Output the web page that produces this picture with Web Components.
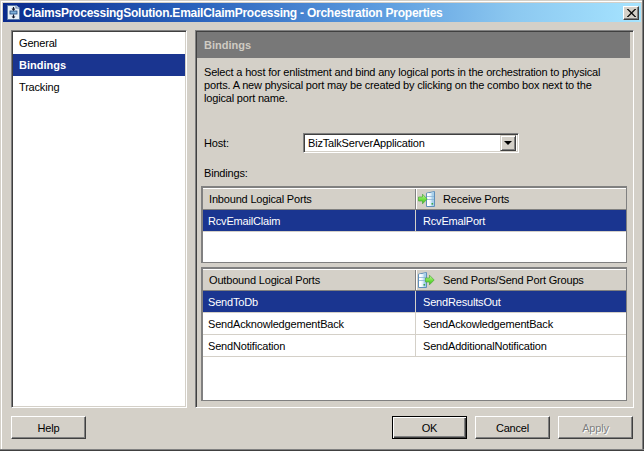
<!DOCTYPE html>
<html><head><meta charset="utf-8">
<style>
html,body{margin:0;padding:0;background:#d4d0c8;}
body{font:11px "Liberation Sans",Arial,sans-serif;letter-spacing:-.18px;color:#000;}
</style></head><body>
<props-window>
  <title-bar slot="title">ClaimsProcessingSolution.EmailClaimProcessing - Orchestration Properties</title-bar>
  <nav-list slot="nav">
    <nav-item>General</nav-item>
    <nav-item selected>Bindings</nav-item>
    <nav-item>Tracking</nav-item>
  </nav-list>
  <bindings-panel slot="main">
    <port-table slot="inbound" head1="Inbound Logical Ports" head2="Receive Ports" kind="receive" h="77">
      <port-row selected><span>RcvEmailClaim</span><span>RcvEmalPort</span></port-row>
    </port-table>
    <port-table slot="outbound" head1="Outbound Logical Ports" head2="Send Ports/Send Port Groups" kind="send" h="134">
      <port-row selected><span>SendToDb</span><span>SendResultsOut</span></port-row>
      <port-row><span>SendAcknowledgementBack</span><span>SendAckowledgementBack</span></port-row>
      <port-row><span>SendNotification</span><span>SendAdditionalNotification</span></port-row>
    </port-table>
  </bindings-panel>
  <dlg-button slot="help">Help</dlg-button>
  <dlg-button slot="actions" default>OK</dlg-button>
  <dlg-button slot="actions">Cancel</dlg-button>
  <dlg-button slot="actions" disabled>Apply</dlg-button>
</props-window>
<script>
const def=(name,html)=>{
  customElements.define(name,class extends HTMLElement{
    constructor(){super();this.attachShadow({mode:'open'}).innerHTML=typeof html==='function'?html(this):html;}
  });
};
def('props-window',`<style>
:host{display:flex;flex-direction:column;width:644px;height:451px;box-sizing:border-box;padding:3px 3px 2px;background:#d4d0c8;position:relative;}
.edge{position:absolute;left:0;right:0;bottom:0;height:2px;background:linear-gradient(#808080 50%,#404040 50%);}
.tw{position:absolute;left:1px;right:1px;top:1px;height:1px;background:#fff;}
.lw{position:absolute;left:1px;top:1px;bottom:2px;width:1px;background:#fff;}
.re{position:absolute;right:0;top:0;bottom:0;width:2px;background:linear-gradient(90deg,#808080 50%,#404040 50%);}
.body{display:flex;gap:8px;padding:8px 7px 0 8px;height:378px;}
.foot{display:flex;justify-content:space-between;padding:8px 8px 0 8px;}
.acts{display:flex;gap:8px;}
</style><div class="tw"></div><div class="lw"></div><div class="re"></div><div class="edge"></div>
<slot name="title"></slot>
<div class="body"><slot name="nav"></slot><slot name="main"></slot></div>
<div class="foot"><slot name="help"></slot><div class="acts"><slot name="actions"></slot></div></div>`);
def('title-bar',`<style>
:host{display:flex;align-items:center;height:19px;flex:none;padding:0 2px 0 4px;
 background:linear-gradient(90deg,#0a2a8c 0%,#2a62bc 30%,#5a9ade 58%,#8cc8f0 80%,#a6e4ff 100%);
 color:#fff;font:bold 12px "Liberation Sans",Arial,sans-serif;letter-spacing:-.24px;}
svg{flex:none;margin-right:3px;}
.t{flex:1;white-space:nowrap;}
.x{flex:none;width:16px;height:14px;box-sizing:border-box;background:#d4d0c8;border:1px solid;border-color:#fff #404040 #404040 #fff;box-shadow:inset -1px -1px 0 #808080;display:flex;align-items:center;justify-content:center;}
</style>
<svg width="13" height="15" viewBox="0 0 13 15"><path d="M.5 .5H9L12.5 3V14.5H.5Z" fill="#e8f0f8" stroke="#5a7aa8"/><path d="M9 .5V3H12.5" fill="#fff" stroke="#5a7aa8"/><rect x="3" y="6" width="7" height="3" fill="#7fb0d8" stroke="#204a80" stroke-width=".8"/><path d="M6.5 2V5M6.5 9.5V13" stroke="#101830" stroke-width="1.2"/><path d="M4.5 3.6L6.5 6 8.5 3.6M4.5 11.4 6.5 13.6 8.5 11.4" fill="#101830"/></svg>
<span class="t"><slot></slot></span>
<span class="x"><svg width="9" height="8" viewBox="0 0 9 8" style="margin:0"><path d="M1 0 4.5 3.2 8 0 9 0 5.2 4 9 8H8L4.5 4.8 1 8H0L3.8 4 0 0Z" fill="#000" stroke="#000" stroke-width=".5"/></svg></span>`);
def('nav-list',`<style>
:host{display:block;width:176px;height:378px;box-sizing:border-box;background:#fff;padding:1px;
 border:1px solid;border-color:#808080 #fff #fff #808080;box-shadow:inset 1px 1px 0 #404040,inset -1px -1px 0 #d4d0c8;}
</style><slot></slot>`);
def('nav-item',`<style>
:host{display:flex;align-items:center;height:22px;padding-left:6px;}
:host([selected]){background:#1a3590;color:#fff;font-weight:bold;letter-spacing:0;}
</style><slot></slot>`);
def('bindings-panel',`<style>
:host{display:flex;flex-direction:column;width:439px;height:378px;box-sizing:border-box;border:1px solid;border-color:#808080 #fff #fff #808080;box-shadow:inset 1px 1px 0 #404040,inset -1px -1px 0 #d4d0c8;padding:1px 1px 0 1px;}
.hd{height:26px;flex:none;background:#787878;color:#cfcbc3;font-weight:bold;letter-spacing:0;display:flex;align-items:center;padding-left:7px;margin-right:2px;box-sizing:border-box;}
.d{margin:8px 8px 0 7px;line-height:13px;height:39px;white-space:nowrap;}
.host{display:flex;align-items:center;margin:28px 0 0 7px;height:20px;}
.host label{width:99px;}
.bl{margin:14px 0 0 7px;line-height:13px;height:13px;}
.tables{display:flex;flex-direction:column;gap:4px;margin:6px 0 0 4px;width:426px;}
</style>
<div class="hd">Bindings</div>
<div class="d">Select a host for enlistment and bind any logical ports in the orchestration to physical<br>ports. A new physical port may be created by clicking on the combo box next to the<br>logical port name.</div>
<div class="host"><label>Host:</label><combo-box>BizTalkServerApplication</combo-box></div>
<div class="bl">Bindings:</div>
<div class="tables"><slot name="inbound"></slot><slot name="outbound"></slot></div>`);
def('combo-box',`<style>
:host{display:flex;width:216px;height:20px;box-sizing:border-box;background:#fff;border:1px solid;border-color:#808080 #fff #fff #808080;box-shadow:inset 1px 1px 0 #404040,inset -1px -1px 0 #d4d0c8;padding:2px;align-items:center;}
.v{flex:1;padding-left:2px;white-space:nowrap;}
.b{width:16px;height:16px;box-sizing:border-box;background:#d4d0c8;border:1px solid;border-color:#d4d0c8 #404040 #404040 #d4d0c8;box-shadow:inset 1px 1px 0 #fff,inset -1px -1px 0 #808080;display:flex;align-items:center;justify-content:center;}
.a{width:0;height:0;border:4px solid transparent;border-top:4px solid #000;border-bottom:0;}
</style><span class="v"><slot></slot></span><span class="b"><span class="a"></span></span>`);
const arrow=(x,id)=>`<path d="M${x+.5} 6h4V3.2L${x+9.2} 8l-4.7 4.8V10h-4Z" fill="url(#${id})" stroke="#4aa83a" stroke-width=".7"/>`;
const serverIcon=(x)=>`<path d="M${x+.5} 2.2 ${x+8.5} .5V15.5H${x+.5}Z" fill="#e4f2fb" stroke="#5f8fba"/><path d="M${x+1} 2.6 ${x+3.5} 2V15H${x+1}Z" fill="#fff"/><path d="M${x+5.5} 1.6 ${x+8} 1V15H${x+5.5}Z" fill="#a8d0ea"/><path d="M${x+1} 5.5h7M${x+1} 8.5h7" stroke="#8db4d4" stroke-width=".8"/><rect x="${x+5.5}" y="12" width="1.6" height="1.6" fill="#3aa84a"/>`;
const grad=id=>`<defs><linearGradient id="${id}" x1="0" y1="0" x2="0" y2="1"><stop offset="0" stop-color="#c8f8a0"/><stop offset=".55" stop-color="#6fe040"/><stop offset="1" stop-color="#40b828"/></linearGradient></defs>`;
def('port-table',h=>{
  const send=h.getAttribute('kind')==='send';
  const icon=send?`<svg width="17" height="16" viewBox="0 0 17 16">${grad('ga')}${serverIcon(0)}${arrow(7,'ga')}</svg>`:`<svg width="17" height="16" viewBox="0 0 17 16">${grad('gb')}${serverIcon(8)}${arrow(0,'gb')}</svg>`;
  return `<style>
:host{display:block;box-sizing:border-box;height:${h.getAttribute('h')}px;background:#fff;border:solid #808080;border-width:2px 1px 1px 2px;}
.h{display:grid;grid-template-columns:212px 1fr;height:22px;box-sizing:border-box;background:#d4d0c8;border-top:1px solid #fff;border-bottom:1px solid #808080;}
.c{display:flex;align-items:center;padding-left:6px;}
.c+.c{border-left:1px solid #808080;box-shadow:inset 1px 0 0 #fff;padding-left:2px;}
svg{flex:none;margin-right:8px;}
</style><div class="h"><div class="c">${h.getAttribute('head1')}</div><div class="c">${icon}${h.getAttribute('head2')}</div></div><slot></slot>`;
});
def('port-row',`<style>
:host{display:grid;grid-template-columns:212px 1fr;height:22px;box-sizing:border-box;border-bottom:1px solid #d4d0c8;align-items:stretch;background:#fff;}
:host([selected]){background:#1a3590;color:#fff;}
::slotted(span){display:flex;align-items:center;padding-left:5px;white-space:nowrap;}
::slotted(span:last-child){border-left:1px solid #d4d0c8;padding-left:7px;}
</style><slot></slot>`);
def('dlg-button',`<style>
:host{display:flex;align-items:center;justify-content:center;width:75px;height:23px;box-sizing:border-box;background:#d4d0c8;border:1px solid;border-color:#fff #404040 #404040 #fff;box-shadow:inset -1px -1px 0 #808080;}
:host([default]){border-color:#000;box-shadow:inset 1px 1px 0 #fff,inset -1px -1px 0 #404040,inset -2px -2px 0 #808080;}
:host([disabled]){color:#808080;text-shadow:1px 1px 0 #fff;}
</style><slot></slot>`);
</script>
</body></html>
